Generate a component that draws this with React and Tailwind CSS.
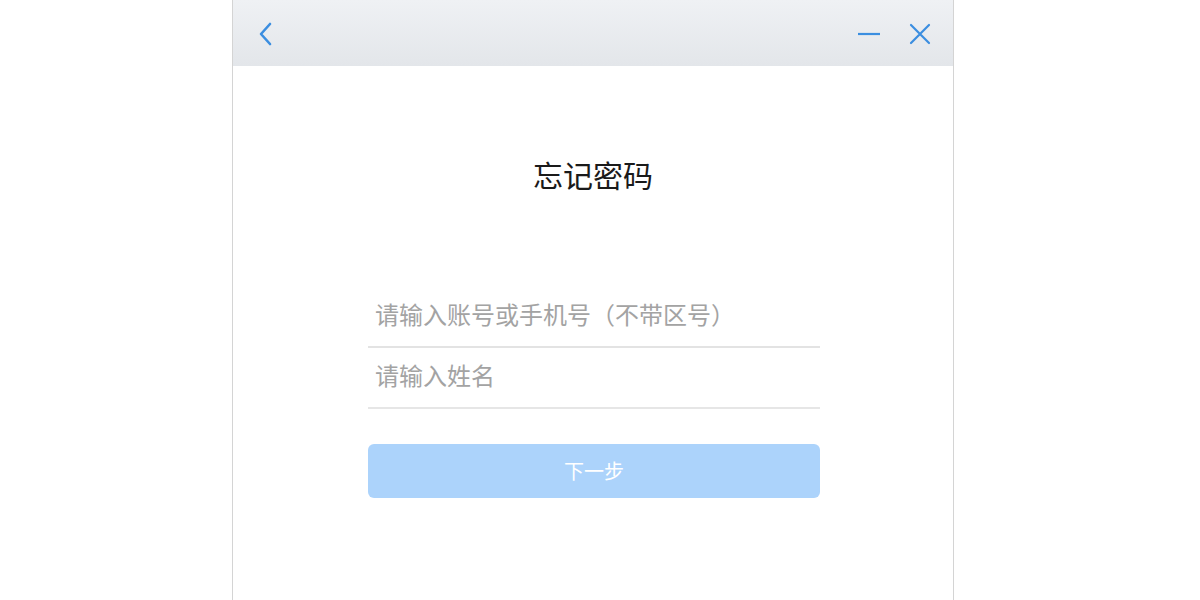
import { useState } from 'react';

const font = { fontFamily: '"Noto Sans CJK SC", "Liberation Sans", sans-serif' };

export default function App() {
  const [account, setAccount] = useState('');
  const [name, setName] = useState('');
  const ready = account && name;

  return (
    <div className="w-[1200px] h-[600px] bg-white flex overflow-hidden" style={font}>
      <div className="ml-[232px] w-[722px] h-[640px] border-x border-[#d4d4d4] flex flex-col">
        {/* title bar */}
        <div className="h-[66px] shrink-0 bg-gradient-to-b from-[#eff1f4] to-[#e3e6ea] flex items-center justify-between pl-[25px] pr-[22px] pt-[2px]">
          <button className="w-[16px] h-[24px] flex items-center justify-center text-[#3b8ee0]">
            <svg width="14" height="24" viewBox="0 0 14 24" fill="none" stroke="currentColor" strokeWidth="2.6" strokeLinecap="round" strokeLinejoin="round">
              <path d="M11 2L2 12l9 10" />
            </svg>
          </button>
          <div className="flex items-center gap-[28px] text-[#3b8ee0]">
            <svg width="24" height="24" viewBox="0 0 24 24" stroke="currentColor" strokeWidth="2.2">
              <path d="M1 12h22" />
            </svg>
            <svg width="22" height="22" viewBox="0 0 22 22" stroke="currentColor" strokeWidth="2.2" strokeLinecap="round">
              <path d="M2 2l18 18M20 2L2 20" />
            </svg>
          </div>
        </div>

        {/* body */}
        <div className="flex flex-col items-center">
          <h1 className="mt-[88px] text-[30px] leading-[40px] text-[#1a1a1a] font-normal">忘记密码</h1>

          <div className="mt-[93px] ml-[2px] w-[452px] flex flex-col">
            <input
              value={account}
              onChange={(e) => setAccount(e.target.value)}
              placeholder="请输入账号或手机号（不带区号）"
              className="h-[61px] px-[7px] pb-[6px] text-[24px] text-[#333] placeholder:text-[#a3a3a3] border-b-2 border-[#e3e3e3] outline-none bg-transparent"
            />
            <input
              value={name}
              onChange={(e) => setName(e.target.value)}
              placeholder="请输入姓名"
              className="h-[61px] px-[7px] pb-[6px] text-[24px] text-[#333] placeholder:text-[#a3a3a3] border-b-2 border-[#e6e6e6] outline-none bg-transparent"
            />
            <button
              disabled={!ready}
              className={`mt-[35px] h-[54px] rounded-[6px] text-[20px] text-white ${ready ? 'bg-[#3b8ee0]' : 'bg-[#acd3fb]'}`}
            >
              下一步
            </button>
          </div>
        </div>
      </div>
    </div>
  );
}
